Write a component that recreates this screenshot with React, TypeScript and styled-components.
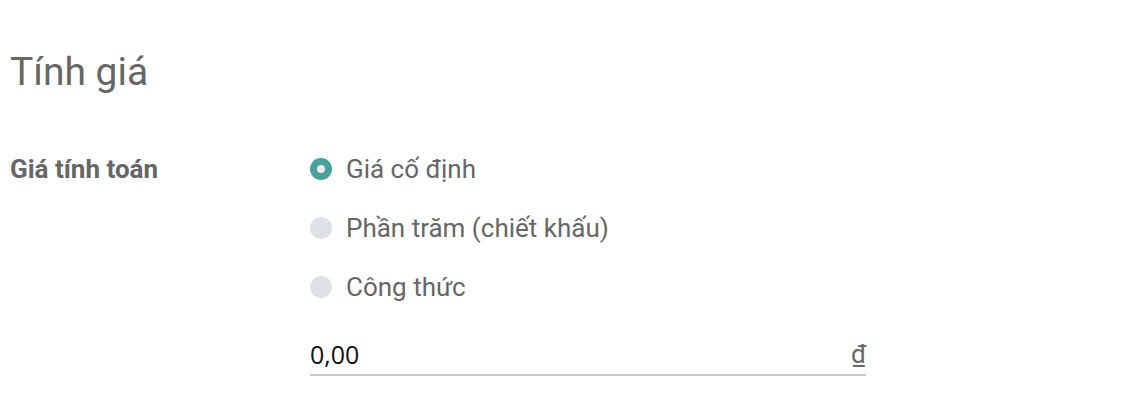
import styled, { createGlobalStyle } from 'styled-components'

const GlobalStyle = createGlobalStyle`
  body {
    margin: 0;
    background: #ffffff;
    font-family: Roboto, "Noto Sans", sans-serif;
    color: #666666;
  }
`

const Page = styled.div`
  padding: 47px 10px 0 10px;
`

const Title = styled.h2`
  margin: 0 0 56px 0;
  font-size: 39px;
  font-weight: 400;
  line-height: 50px;
  color: #666666;
`

const FieldRow = styled.div`
  display: grid;
  grid-template-columns: 300px 556px;
  align-items: start;
`

const Label = styled.div`
  font-size: 26px;
  font-weight: 700;
  line-height: 32px;
  color: #666666;
`

const Options = styled.div`
  display: flex;
  flex-direction: column;
  gap: 27px;
`

const Option = styled.label`
  display: flex;
  align-items: center;
  gap: 14px;
  font-size: 26px;
  line-height: 32px;
  color: #666666;
`

const Radio = styled.span<{ checked?: boolean }>`
  width: 22px;
  height: 22px;
  border-radius: 50%;
  box-sizing: border-box;
  background: ${p => (p.checked ? '#e9ecef' : '#dee2e6')};
  border: ${p => (p.checked ? '7px solid #47a09a' : 'none')};
  flex-shrink: 0;
`

const AmountInput = styled.div`
  display: flex;
  align-items: flex-end;
  justify-content: space-between;
  margin-top: 31px;
  height: 40px;
  border-bottom: 2px solid #c8c8c8;
`

const Amount = styled.span`
  font-family: "Open Sans", sans-serif;
  font-size: 25px;
  line-height: 32px;
  color: #111111;
  padding-bottom: 4px;
`

const Currency = styled.span`
  font-size: 26px;
  line-height: 32px;
  color: #666666;
  text-decoration: underline;
  text-underline-offset: 3px;
  padding-bottom: 4px;
`

const options = [
  { label: 'Giá cố định', checked: true },
  { label: 'Phần trăm (chiết khấu)', checked: false },
  { label: 'Công thức', checked: false },
]

export default function App() {
  return (
    <>
      <GlobalStyle />
      <Page>
        <Title>Tính giá</Title>
        <FieldRow>
          <Label>Giá tính toán</Label>
          <div>
            <Options>
              {options.map(o => (
                <Option key={o.label}>
                  <Radio checked={o.checked} />
                  {o.label}
                </Option>
              ))}
            </Options>
            <AmountInput>
              <Amount>0,00</Amount>
              <Currency>₫</Currency>
            </AmountInput>
          </div>
        </FieldRow>
      </Page>
    </>
  )
}
